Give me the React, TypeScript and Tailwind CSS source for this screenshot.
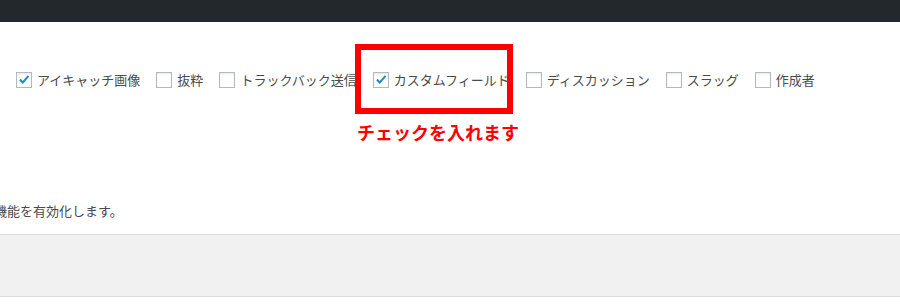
const jp = { fontFamily: '"Noto Sans CJK JP", "Noto Sans", sans-serif' };

const CheckBox = ({ checked }: { checked?: boolean }) => (
  <span className="relative flex h-4 w-4 shrink-0 items-center justify-center border border-[#b4b9be] bg-white shadow-[inset_0_1px_2px_rgba(0,0,0,0.1)]">
    {checked && (
      <svg viewBox="0 0 16 16" className="h-[14px] w-[14px]">
        <path
          d="M2.5 8.2 L4.3 6.6 L6.6 9.2 L12.3 2.6 L14 4 L6.7 12.6 Z"
          fill="#1e8cbe"
        />
      </svg>
    )}
  </span>
);

const supports = [
  { label: "アイキャッチ画像", checked: true },
  { label: "抜粋", checked: false },
  { label: "トラックバック送信", checked: false },
  { label: "カスタムフィールド", checked: true },
  { label: "ディスカッション", checked: false },
  { label: "スラッグ", checked: false },
  { label: "作成者", checked: false },
];

const App = () => {
  return (
    <div
      className="relative h-[308px] w-[900px] overflow-hidden bg-white text-[13px] text-[#4a4a4a]"
      style={jp}
    >
      <div className="h-[22px] bg-[#23282d]" />

      <div className="mt-[50px] flex h-4 items-center whitespace-nowrap pl-4 leading-4">
        {supports.map((item) => (
          <label key={item.label} className="mr-[16px] flex items-center gap-[5px]">
            <CheckBox checked={item.checked} />
            <span>{item.label}</span>
          </label>
        ))}
      </div>

      <p className="ml-[-6px] mt-[113px] whitespace-nowrap leading-5">
        機能を有効化します。
      </p>

      <div className="mt-[13px] h-[63px] border-y border-[#dcdcdc] bg-[#f1f1f1]" />

      {/* annotation */}
      <div className="absolute left-[355px] top-[44px] h-[70px] w-[158px] border-[6px] border-[#ff0000]" />
      <div className="absolute left-[357px] top-[123px] whitespace-nowrap text-[18px] font-bold leading-[18px] text-[#ff0000]">
        チェックを入れます
      </div>
    </div>
  );
};

export default App;
